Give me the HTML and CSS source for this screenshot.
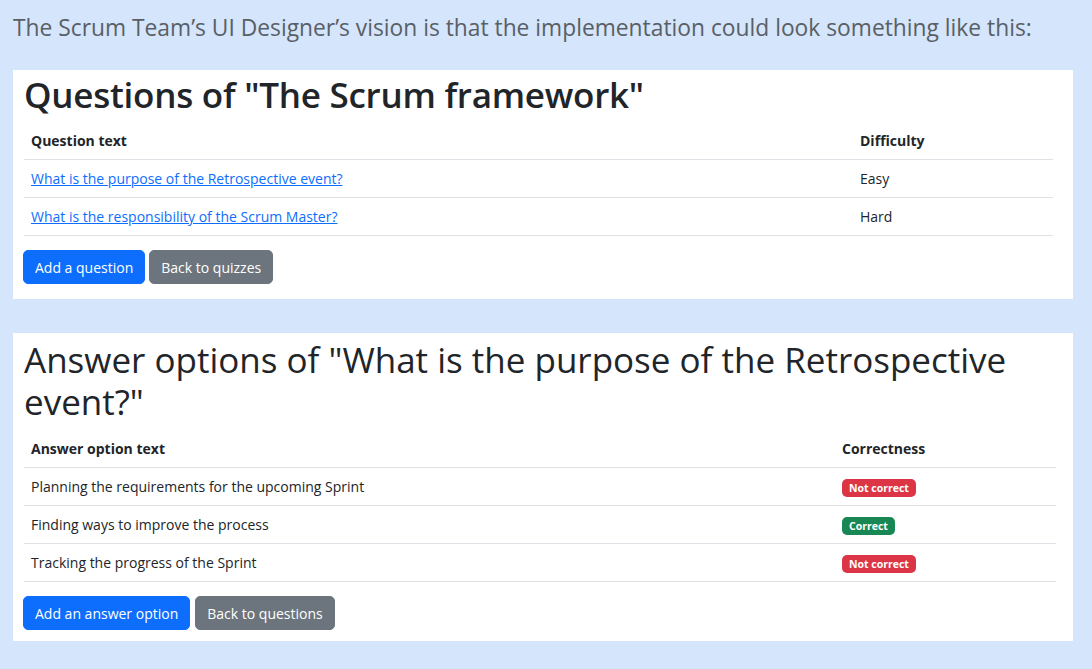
FILE: index.html
```html
<!DOCTYPE html>
<html lang="en">
<head>
<meta charset="utf-8">
<title>Scrum quiz</title>
<link rel="stylesheet" href="styles.css">
</head>
<body>
<p class="intro">The Scrum Team’s UI Designer’s vision is that the implementation could look something like this:</p>

<section class="card card-questions">
  <h1 class="title title-bold">Questions of "The Scrum framework"</h1>
  <table class="tbl tbl-questions">
    <thead>
      <tr><th>Question text</th><th class="col2">Difficulty</th></tr>
    </thead>
    <tbody>
      <tr><td><a href="#" class="link">What is the purpose of the Retrospective event?</a></td><td>Easy</td></tr>
      <tr><td><a href="#" class="link">What is the responsibility of the Scrum Master?</a></td><td>Hard</td></tr>
    </tbody>
  </table>
  <div class="actions">
    <button class="btn btn-primary">Add a question</button>
    <button class="btn btn-secondary">Back to quizzes</button>
  </div>
</section>

<section class="card card-answers">
  <h1 class="title">Answer options of "What is the purpose of the Retrospective event?"</h1>
  <table class="tbl tbl-answers">
    <thead>
      <tr><th>Answer option text</th><th class="col2">Correctness</th></tr>
    </thead>
    <tbody>
      <tr><td>Planning the requirements for the upcoming Sprint</td><td><span class="badge badge-danger">Not correct</span></td></tr>
      <tr><td>Finding ways to improve the process</td><td><span class="badge badge-success">Correct</span></td></tr>
      <tr><td>Tracking the progress of the Sprint</td><td><span class="badge badge-danger">Not correct</span></td></tr>
    </tbody>
  </table>
  <div class="actions">
    <button class="btn btn-primary">Add an answer option</button>
    <button class="btn btn-secondary">Back to questions</button>
  </div>
</section>
</body>
</html>
```

FILE: styles.css
```css
html, body {
  margin: 0;
  padding: 0;
}
body {
  background: #d4e5fc;
  font-family: "Open Sans", "Noto Sans", sans-serif;
  color: #212529;
  padding: 0 19px 0 13px;
  font-size: 14px;
}
.intro {
  margin: 0;
  padding: 13px 0 0 0;
  font-size: 22.8px;
  line-height: 30px;
  color: #5a5f66;
  height: 57px;
  white-space: nowrap;
}
.card {
  background: #ffffff;
  padding: 4px 20px 15px 11px;
}
.card-answers {
  margin-top: 34px;
  padding: 6px 17px 11px 11px;
}
.title {
  margin: 0 0 6px 0;
  font-size: 35px;
  line-height: 42px;
  font-weight: 400;
}
.title-bold {
  font-weight: 600;
  letter-spacing: -0.25px;
}
.card-answers .title {
  margin-bottom: 7px;
}
.tbl {
  width: 100%;
  border-collapse: collapse;
  margin-bottom: 14px;
}
.tbl th, .tbl td {
  text-align: left;
  padding: 8px 7px;
  height: 21px;
  line-height: 21px;
  border-bottom: 1px solid #dee2e6;
  vertical-align: middle;
}
.tbl th {
  font-weight: 700;
}
.tbl-questions .col2 { width: 186px; }
.tbl-answers .col2 { width: 207px; }
.link {
  color: #0d6efd;
  text-decoration: underline;
}
.badge {
  display: inline-block;
  vertical-align: top;
  margin-top: 3px;
  font-size: 10.5px;
  font-weight: 700;
  line-height: 11px;
  color: #fff;
  padding: 3.5px 7px;
  border-radius: 5px;
}
.badge-danger { background: #dc3545; }
.badge-success { background: #198754; }
.actions {
  display: flex;
  gap: 4px;
}
.card-answers .actions {
  gap: 5px;
}
.btn {
  font-family: inherit;
  font-size: 14px;
  line-height: 21px;
  padding: 5.5px 11px;
  border: 1px solid transparent;
  border-radius: 5px;
  color: #fff;
  margin-left: -1px;
}
.btn + .btn { margin-left: 0; }
.btn-primary { background: #0d6efd; border-color: #0d6efd; }
.btn-secondary { background: #6c757d; border-color: #6c757d; }
```
